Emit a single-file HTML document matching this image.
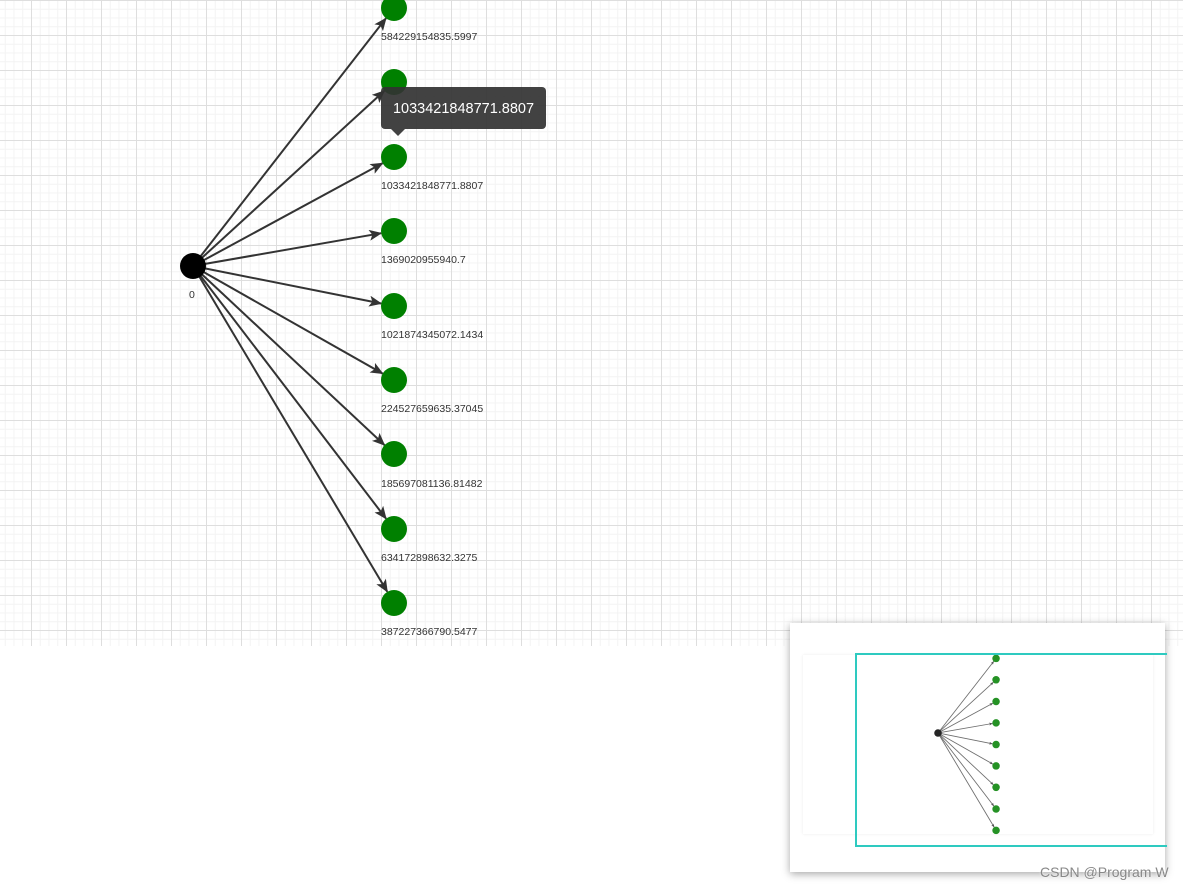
<!DOCTYPE html>
<html><head><meta charset="utf-8"><style>
html,body{margin:0;padding:0;width:1183px;height:889px;overflow:hidden;background:#fff;font-family:"Liberation Sans",sans-serif}
#grid{position:absolute;left:0;top:0;width:1183px;height:646px;
background-color:#fff;
background-image:
linear-gradient(to right,#dedede 1px,transparent 1px),
linear-gradient(to bottom,#dedede 1px,transparent 1px),
linear-gradient(to right,#f3f3f3 1px,transparent 1px),
linear-gradient(to bottom,#f3f3f3 1px,transparent 1px);
background-size:35px 35px,35px 35px,8.75px 8.75px,8.75px 8.75px;
background-position:31px 0,0 0,31px 0,0 0;}
svg{position:absolute;left:0;top:0}
#tip{position:absolute;left:381px;top:87px;width:165px;height:42px;background:rgba(50,50,50,.92);border-radius:4px;color:#fff;font-size:14.5px;line-height:44px;text-align:center}
#tip:after{content:"";position:absolute;left:10px;bottom:-7px;border-left:7px solid transparent;border-right:7px solid transparent;border-top:7px solid rgba(50,50,50,.92)}
#mini{position:absolute;left:790px;top:623px;width:375px;height:249px;background:#fff;box-shadow:0 2px 8px rgba(0,0,0,.35)}
#mini .in{position:absolute;left:13px;top:32px;width:350px;height:179px;background:#fff;box-shadow:0 0 3px rgba(0,0,0,.08)}
#view{position:absolute;left:855px;top:653px;width:310px;height:190px;border:2px solid #2ecac0;border-right:none}
#wm{position:absolute;left:1040px;top:864px;font-size:14px;color:#888;text-shadow:0 0 2px #fff}
</style></head><body>
<div id="grid"></div>
<div id="mini"><div class="in"></div></div>
<svg width="1183" height="889" xmlns="http://www.w3.org/2000/svg">
<defs><marker id="ar" markerUnits="userSpaceOnUse" markerWidth="13" markerHeight="11" refX="12" refY="5.5" orient="auto"><path d="M0,0 L13,5.5 L0,11 L3,5.5 z" fill="#333"/></marker>
<marker id="ar2" markerUnits="userSpaceOnUse" markerWidth="12" markerHeight="10" refX="11" refY="5" orient="auto"><path d="M0,0 L12,5 L0,10 L3,5 z" fill="#333"/></marker></defs>
<g id="g" font-size="10.5" fill="#333">
<g stroke="#333" stroke-width="2" marker-end="url(#ar)">
<line x1="193" y1="266" x2="386" y2="18.3"/>
<line x1="193" y1="266" x2="384.4" y2="90.8"/>
<line x1="193" y1="266" x2="382.6" y2="163.2"/>
<line x1="193" y1="266" x2="381.2" y2="233.2"/>
<line x1="193" y1="266" x2="381.2" y2="303.5"/>
<line x1="193" y1="266" x2="382.7" y2="373.6"/>
<line x1="193" y1="266" x2="384.5" y2="445.1"/>
<line x1="193" y1="266" x2="386.1" y2="518.7"/>
<line x1="193" y1="266" x2="387.3" y2="591.8"/>
</g>
<circle cx="193" cy="266" r="13" fill="#000"/>
<g fill="#008000">
<circle cx="394" cy="8" r="13"/><circle cx="394" cy="82" r="13"/><circle cx="394" cy="157" r="13"/>
<circle cx="394" cy="231" r="13"/><circle cx="394" cy="306" r="13"/><circle cx="394" cy="380" r="13"/>
<circle cx="394" cy="454" r="13"/><circle cx="394" cy="529" r="13"/><circle cx="394" cy="603" r="13"/>
</g>
<text x="189" y="298">0</text>
<text x="381" y="40">584229154835.5997</text>
<text x="381" y="189">1033421848771.8807</text>
<text x="381" y="263">1369020955940.7</text>
<text x="381" y="338">1021874345072.1434</text>
<text x="381" y="412">224527659635.37045</text>
<text x="381" y="487">185697081136.81482</text>
<text x="381" y="561">634172898632.3275</text>
<text x="381" y="635">387227366790.5477</text>
</g>
<g transform="translate(882.2,656.1) scale(0.289)" opacity="0.85">
<g stroke="#555" stroke-width="3" marker-end="url(#ar2)">
<line x1="193" y1="266" x2="386" y2="18.3"/><line x1="193" y1="266" x2="384.4" y2="90.8"/>
<line x1="193" y1="266" x2="382.6" y2="163.2"/><line x1="193" y1="266" x2="381.2" y2="233.2"/>
<line x1="193" y1="266" x2="381.2" y2="303.5"/><line x1="193" y1="266" x2="382.7" y2="373.6"/>
<line x1="193" y1="266" x2="384.5" y2="445.1"/><line x1="193" y1="266" x2="386.1" y2="518.7"/>
<line x1="193" y1="266" x2="387.3" y2="591.8"/>
</g>
<circle cx="193" cy="266" r="13" fill="#000"/>
<g fill="#008000">
<circle cx="394" cy="8" r="13"/><circle cx="394" cy="82" r="13"/><circle cx="394" cy="157" r="13"/>
<circle cx="394" cy="231" r="13"/><circle cx="394" cy="306" r="13"/><circle cx="394" cy="380" r="13"/>
<circle cx="394" cy="454" r="13"/><circle cx="394" cy="529" r="13"/><circle cx="394" cy="603" r="13"/>
</g>
</g>
</svg>
<div id="view"></div>
<div id="tip">1033421848771.8807</div>
<div id="wm">CSDN @Program W</div>
</body></html>
